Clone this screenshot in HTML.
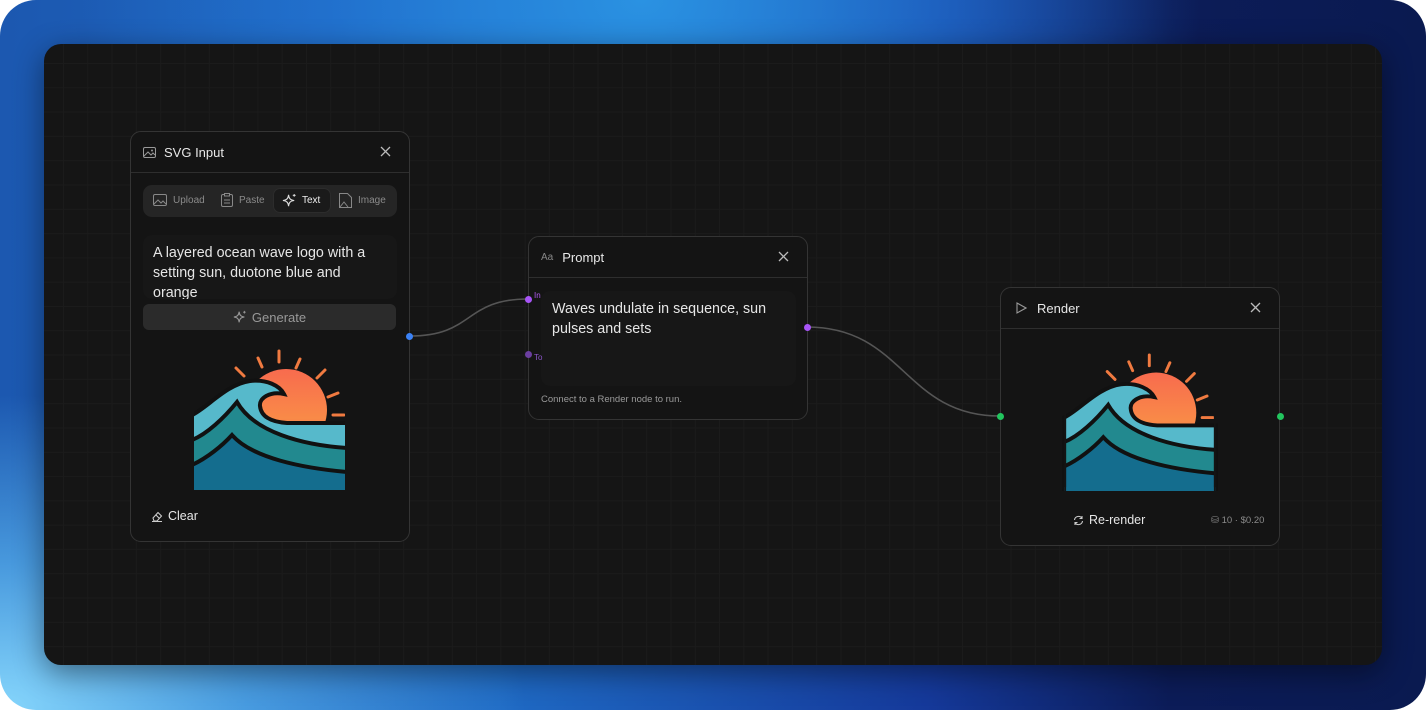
<!DOCTYPE html>
<html><head><meta charset="utf-8"><style>
*{box-sizing:border-box;margin:0;padding:0}
html,body{width:1426px;height:710px;background:#fff;overflow:hidden;font-family:"Liberation Sans","DejaVu Sans",sans-serif}
.outer{position:absolute;left:0;top:0;width:1426px;height:710px;border-radius:36px;overflow:hidden;
background:radial-gradient(ellipse 700px 420px at 0% 100%,#86d6fc 0%,rgba(90,180,240,.7) 35%,rgba(40,120,220,0) 75%),
radial-gradient(ellipse 700px 500px at 45% 0%,#2a92e2 0%,rgba(35,120,215,.6) 45%,rgba(30,90,190,0) 80%),
linear-gradient(90deg,#1c58b0 0%,#1f6ac4 35%,#15399a 65%,#0c1c58 82%,#0a1a50 100%);}
.canvas{position:absolute;left:44px;top:44px;width:1338px;height:621px;border-radius:17px;background-color:#151515;
background-image:linear-gradient(#1b1b1b 1px,transparent 1px),linear-gradient(90deg,#1b1b1b 1px,transparent 1px);
background-size:24.3px 24.3px;background-position:19px 19px;box-shadow:0 8px 30px rgba(0,0,0,.45);overflow:hidden}
.node{position:absolute;background:#141414;border:1px solid #343434;border-radius:11px}
.hdr{height:41px;border-bottom:1px solid #2e2e2e;display:flex;align-items:center;padding-left:12px;color:#e8e8e8;font-size:13px}
.hdr .t{margin-left:8px}
.x{position:absolute;right:18px;top:14px;width:11px;height:11px}
.abs{position:absolute}
.port{position:absolute;width:7px;height:7px;border-radius:50%}
</style></head><body>
<svg width="0" height="0" style="position:absolute"><defs>
<linearGradient id="sg" x1="0" y1="0" x2="0" y2="1"><stop offset="0" stop-color="#f86b4e"/><stop offset=".6" stop-color="#f98a48"/><stop offset="1" stop-color="#f4604a"/></linearGradient>
<clipPath id="sc"><rect x="0" y="0" width="155" height="76"/></clipPath>
<symbol id="logo" viewBox="0 0 155 142">
<g stroke="#f07a40" stroke-width="3" stroke-linecap="round">
<line x1="87" y1="3" x2="87" y2="14"/><line x1="66" y1="10" x2="70" y2="19"/><line x1="108" y1="11" x2="104" y2="20"/>
<line x1="44" y1="20" x2="52" y2="28"/><line x1="133" y1="22" x2="125" y2="30"/><line x1="146" y1="45" x2="136" y2="49"/><line x1="141" y1="67" x2="152" y2="67"/>
</g>
<circle cx="94" cy="62" r="41" fill="url(#sg)" clip-path="url(#sc)"/>
<path d="M0,67 C15,60 35,36 58,33 C75,31 88,38 92,46 C78,43 67,50 68,58 C69,68 78,74 95,75 L155,75 L155,142 L0,142 Z" fill="#56b9cb" stroke="#111" stroke-width="4"/>
<path d="M0,92 C15,86 32,70 45,54 C62,84 110,97 155,100 L155,142 L0,142Z" fill="#22898f" stroke="#111" stroke-width="4"/>
<path d="M0,117 C15,110 30,98 40,87 C60,110 110,120 155,124 L155,142 L0,142Z" fill="#146d8e" stroke="#111" stroke-width="4"/>
<rect x="0" y="138" width="155" height="4" fill="#146d8e"/>
<rect x="0" y="60" width="2" height="82" fill="#141414"/><rect x="153" y="60" width="2" height="82" fill="#141414"/>
</symbol>
<symbol id="xx" viewBox="0 0 11 11"><path d="M1,1L10,10M10,1L1,10" stroke="#bbb" stroke-width="1.3"/></symbol>
<symbol id="spark" viewBox="0 0 16 16"><path d="M7,2 C7.5,6 9,7.5 13,8 C9,8.5 7.5,10 7,14 C6.5,10 5,8.5 1,8 C5,7.5 6.5,6 7,2Z" fill="none" stroke="currentColor" stroke-width="1.2"/><path d="M13,1v3M11.5,2.5h3" stroke="currentColor" stroke-width="1"/></symbol>
</defs></svg>
<div class="outer">
<div class="canvas">
<svg class="abs" style="left:0;top:0" width="1338" height="621">
<path d="M366,292 C430,292 420,255 484,255" fill="none" stroke="#555" stroke-width="1.6"/>
<path d="M763,283 C860,283 860,372 956,372" fill="none" stroke="#555" stroke-width="1.6"/>
</svg>
</div>

<!-- SVG Input -->
<div class="node" style="left:130px;top:131px;width:280px;height:411px">
<div class="hdr"><svg width="13" height="11" viewBox="0 0 13 11"><rect x=".5" y=".5" width="12" height="10" rx="1.5" fill="none" stroke="#999"/><path d="M1,9 L5,5 L8,8 L10,6 L12,8" fill="none" stroke="#999"/><circle cx="9" cy="3.5" r="1" fill="#999"/></svg><span class="t">SVG Input</span></div>
<svg class="x" viewBox="0 0 11 11"><use href="#xx"/></svg>
<div class="abs" style="left:12px;top:53px;width:254px;height:32px;background:#252525;border-radius:9px;font-size:10px;color:#8a8a8a">
<div class="abs" style="left:10px;top:9px;display:flex;align-items:center"><svg width="14" height="12" viewBox="0 0 14 12"><rect x=".5" y=".5" width="13" height="11" rx="1.5" fill="none" stroke="#888"/><path d="M1,10 L5,6 L8,9 L10,7 L13,10" fill="none" stroke="#888"/></svg><span style="margin-left:6px">Upload</span></div>
<div class="abs" style="left:78px;top:8px;display:flex;align-items:center"><svg width="12" height="14" viewBox="0 0 12 14"><rect x=".5" y="1.5" width="11" height="12" rx="1.5" fill="none" stroke="#888"/><rect x="3.5" y=".5" width="5" height="2.5" fill="#252525" stroke="#888"/><path d="M3,7h6M3,10h6" stroke="#888"/></svg><span style="margin-left:6px">Paste</span></div>
<div class="abs" style="left:130px;top:3px;width:58px;height:25px;background:#1a1a1a;border:1px solid #2c2c2c;border-radius:7px;display:flex;align-items:center;padding-left:8px;color:#eee"><svg width="15" height="15" style="color:#ddd"><use href="#spark"/></svg><span style="margin-left:5px">Text</span></div>
<div class="abs" style="left:196px;top:8px;display:flex;align-items:center"><svg width="13" height="15" viewBox="0 0 13 15"><path d="M.5,.5h8l4,4v10h-12z" fill="none" stroke="#888"/><path d="M1,14 L5,9 L9,14" fill="none" stroke="#888"/></svg><span style="margin-left:6px">Image</span></div>
</div>
<div class="abs" style="left:12px;top:103px;width:254px;height:64px;background:#171717;border-radius:9px;overflow:hidden;padding:8px 28px 8px 10px;font-size:14.3px;line-height:20px;color:#e6e6e6">A layered ocean wave logo with a setting sun, duotone blue and orange</div>
<div class="abs" style="left:12px;top:172px;width:253px;height:26px;background:#2b2b2b;border-radius:6px;display:flex;align-items:center;justify-content:center;font-size:13px;color:#999"><svg width="14" height="14" style="color:#999"><use href="#spark"/></svg><span style="margin-left:5px">Generate</span></div>
<svg class="abs" style="left:61px;top:216px" width="155" height="142"><use href="#logo"/></svg>
<div class="abs" style="left:20px;top:377px;display:flex;align-items:center;font-size:12.5px;color:#e6e6e6"><svg width="12" height="11" viewBox="0 0 12 11"><path d="M2,7 L7,1.5 L10.5,5 L6,10 L3,10Z M5,4 L8.5,7.5 M1,10.5h10" fill="none" stroke="#ccc" stroke-width="1.1"/></svg><span style="margin-left:5px">Clear</span></div>
</div>
<div class="port" style="left:406px;top:333px;background:#3b82f6"></div>

<!-- Prompt -->
<div class="node" style="left:528px;top:236px;width:280px;height:184px">
<div class="hdr"><span style="font-size:10px;color:#888">Aa</span><span class="t" style="margin-left:9px">Prompt</span></div>
<svg class="x" viewBox="0 0 11 11"><use href="#xx"/></svg>
<div class="abs" style="left:12px;top:54px;width:255px;height:95px;background:#171717;border-radius:9px;padding:8px 11px;font-size:14.3px;line-height:20px;color:#e6e6e6">Waves undulate in sequence, sun pulses and sets</div>
<div class="abs" style="left:12px;top:157px;font-size:9.5px;color:#9a9a9a">Connect to a Render node to run.</div>
<div class="abs" style="left:5px;top:54px;font-size:8px;color:#b05af0">In</div>
<div class="abs" style="left:5px;top:116px;font-size:8px;color:#8a55c8">To</div>
</div>
<div class="port" style="left:525px;top:296px;background:#a855f7"></div>
<div class="port" style="left:525px;top:351px;background:#6b3fa0"></div>
<div class="port" style="left:804px;top:324px;background:#a855f7"></div>

<!-- Render -->
<div class="node" style="left:1000px;top:287px;width:280px;height:259px">
<div class="hdr" style="padding-left:15px"><svg width="11" height="12" viewBox="0 0 11 12"><path d="M1,1 L10,6 L1,11Z" fill="none" stroke="#999" stroke-width="1.1"/></svg><span class="t" style="margin-left:10px">Render</span></div>
<svg class="x" viewBox="0 0 11 11"><use href="#xx"/></svg>
<svg class="abs" style="left:61px;top:64px" width="156" height="139"><use href="#logo"/></svg>
<div class="abs" style="left:72px;top:225px;display:flex;align-items:center;font-size:12.5px;color:#e6e6e6"><svg width="11" height="11" viewBox="0 0 11 11"><path d="M1.5,5 A4,4 0 0 1 9,3.5 M9.5,6 A4,4 0 0 1 2,7.5 M9,1v2.5h-2.5M2,10v-2.5h2.5" fill="none" stroke="#ccc" stroke-width="1.1"/></svg><span style="margin-left:5px">Re-render</span></div>
<div class="abs" style="left:210px;top:227px;font-size:9.5px;color:#8a8a8a">⛁ 10 · $0.20</div>
</div>
<div class="port" style="left:997px;top:413px;background:#22c55e"></div>
<div class="port" style="left:1277px;top:413px;background:#22c55e"></div>
</div>
</body></html>
